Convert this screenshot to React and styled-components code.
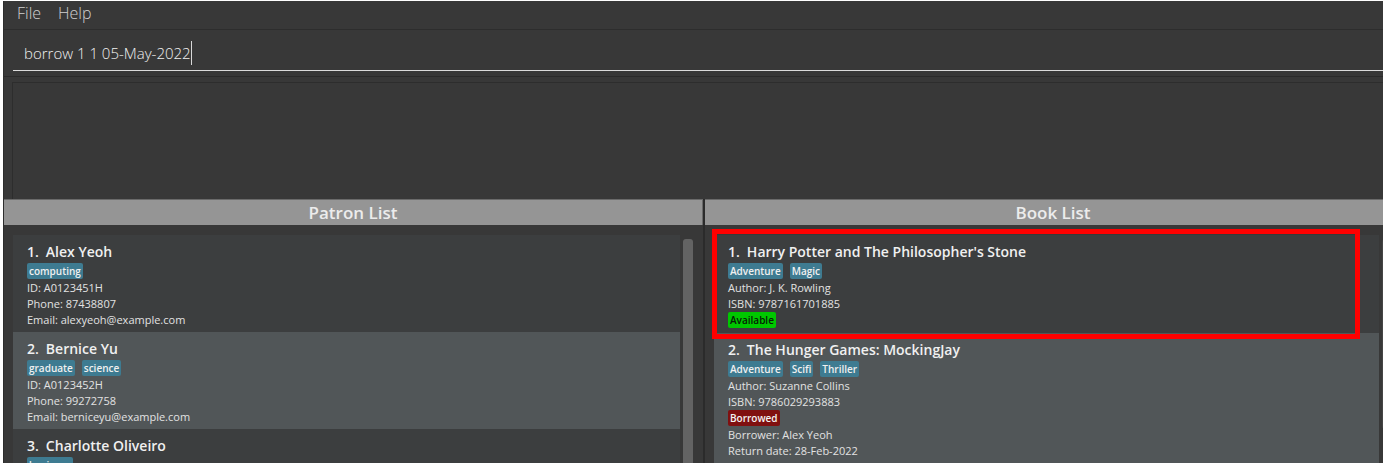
import React from "react";
import styled, { createGlobalStyle } from "styled-components";

const GlobalStyle = createGlobalStyle`
  * { box-sizing: border-box; }
  body {
    margin: 0;
    background: #ffffff;
    font-family: "Open Sans", "Noto Sans", sans-serif;
    color: #e2e2e2;
  }
`;

const Frame = styled.div`
  height: 100vh;
  padding: 1px 3px 4px;
`;

const Window = styled.div`
  height: 100%;
  display: flex;
  flex-direction: column;
  overflow: hidden;
  background: #383838;
  border-left: 1px solid #2d2d2d;
`;

const MenuBar = styled.nav`
  flex: none;
  display: flex;
  gap: 17px;
  height: 29px;
  padding: 0 13px 4px;
  border-bottom: 1px solid #2d2d2d;
`;

const MenuButton = styled.button`
  padding: 0;
  border: 0;
  background: none;
  color: #d0d0d0;
  font: 300 16px/24px "Open Sans", "Noto Sans", sans-serif;
`;

const CommandBar = styled.form`
  flex: none;
  height: 47px;
  padding: 5px 0 5px 9px;
  border-bottom: 1px solid #2b2b2b;
`;

const CommandField = styled.div`
  display: flex;
  align-items: center;
  height: 36px;
  padding-left: 11px;
  border-bottom: 1px solid #dcdcdc;
`;

const CommandInput = styled.input`
  field-sizing: content;
  padding: 0;
  border: 0;
  outline: 0;
  background: none;
  color: #f0f0f0;
  caret-color: transparent;
  font: 300 15px/24px "Open Sans", "Noto Sans", sans-serif;
`;

const Caret = styled.span`
  width: 1px;
  height: 24px;
  background: #d8d8d8;
`;

const ResultArea = styled.section`
  flex: none;
  height: 122px;
  padding: 5px 0 0 8px;
`;

const ResultBox = styled.output`
  display: block;
  height: 100%;
  border: solid #2d2d2d;
  border-width: 1px 0 0 1px;
`;

const Split = styled.main`
  flex: 1;
  min-height: 0;
  display: grid;
  grid-template-columns: 1fr 1fr;
  width: calc(100% + 19px);
`;

const Panel = styled.section`
  min-width: 0;
  min-height: 0;
  display: flex;
  flex-direction: column;
  & + & { border-left: 2px solid #2b2b2b; }
`;

const PanelTitle = styled.h2`
  flex: none;
  margin: 0;
  padding-top: 1px;
  border-top: 1px solid #6a6a6a;
  border-right: 1px solid #6a6a6a;
  background: #959595;
  color: #ececec;
  font-size: 17px;
  font-weight: 600;
  line-height: 24px;
  text-align: center;
`;

const PanelBody = styled.div`
  flex: 1;
  min-height: 0;
  display: flex;
  gap: 3px;
  padding: 10px 10px 0 9px;
`;

const CardList = styled.ol`
  flex: 1;
  margin: 0;
  padding: 0;
  list-style: none;
`;

const ScrollThumb = styled.div`
  width: 10px;
  height: ${(p) => p.$length};
  margin-top: 4px;
  border-radius: 3px;
  background: ${(p) => (p.$faint ? "#454545" : "#636363")};
`;

const Card = styled.li`
  position: relative;
  padding: 6px 14px 4px;
  background: #3c3e3f;
  font-size: 11px;
  line-height: 16px;
  &:nth-child(even) { background: #515658; }
`;

const CardTitle = styled.h3`
  display: flex;
  gap: 7px;
  margin: 0;
  color: #f0f0f0;
  font-size: 14px;
  font-weight: 600;
  line-height: 22px;
`;

const Tags = styled.div`
  display: flex;
  gap: 7px;
  margin-bottom: 1px;
`;

const Tag = styled.span`
  padding: 0 2px;
  border-radius: 2px;
  background: #3e7b91;
  color: #f0f0f0;
  font-size: 10px;
  font-weight: 600;
  line-height: 16px;
`;

const Status = styled(Tag)`
  display: block;
  width: fit-content;
  margin-bottom: 1px;
  background: ${(p) => (p.$available ? "#00c800" : "#801010")};
  color: ${(p) => (p.$available ? "#062006" : "#f4f4f4")};
`;

const Line = styled.p`
  margin: 0;
`;

const Highlight = styled.div`
  position: absolute;
  inset: -6px 19px -6px -2px;
  z-index: 1;
  border: 5px solid #ff0000;
`;

const patrons = [
  { name: "Alex Yeoh", tags: ["computing"], lines: ["ID: A0123451H", "Phone: 87438807", "Email: alexyeoh@example.com"] },
  { name: "Bernice Yu", tags: ["graduate", "science"], lines: ["ID: A0123452H", "Phone: 99272758", "Email: berniceyu@example.com"] },
  { name: "Charlotte Oliveiro", tags: ["business"], lines: [] },
];

const books = [
  {
    name: "Harry Potter and The Philosopher's Stone",
    tags: ["Adventure", "Magic"],
    lines: ["Author: J. K. Rowling", "ISBN: 9787161701885"],
    status: "Available",
    selected: true,
  },
  {
    name: "The Hunger Games: MockingJay",
    tags: ["Adventure", "Scifi", "Thriller"],
    lines: ["Author: Suzanne Collins", "ISBN: 9786029293883"],
    status: "Borrowed",
    loan: ["Borrower: Alex Yeoh", "Return date: 28-Feb-2022"],
  },
];

function ListPanel({ title, items, thumb, faint }) {
  return (
    <Panel>
      <PanelTitle>{title}</PanelTitle>
      <PanelBody>
        <CardList>
          {items.map((item, i) => (
            <Card key={item.name}>
              <CardTitle>
                <span>{i + 1}.</span>
                <span>{item.name}</span>
              </CardTitle>
              <Tags>
                {item.tags.map((t) => <Tag key={t}>{t}</Tag>)}
              </Tags>
              {item.lines.map((l) => <Line key={l}>{l}</Line>)}
              {item.status && (
                <Status $available={item.status === "Available"}>{item.status}</Status>
              )}
              {item.loan?.map((l) => <Line key={l}>{l}</Line>)}
              {item.selected && <Highlight />}
            </Card>
          ))}
        </CardList>
        <ScrollThumb $length={thumb} $faint={faint} />
      </PanelBody>
    </Panel>
  );
}

export default function App() {
  return (
    <Frame>
      <GlobalStyle />
      <Window>
        <MenuBar>
          <MenuButton>File</MenuButton>
          <MenuButton>Help</MenuButton>
        </MenuBar>
        <CommandBar onSubmit={(e) => e.preventDefault()}>
          <CommandField>
            <CommandInput aria-label="Command" defaultValue="borrow 1 1 05-May-2022" />
            <Caret />
          </CommandField>
        </CommandBar>
        <ResultArea>
          <ResultBox aria-label="Result" />
        </ResultArea>
        <Split>
          <ListPanel title="Patron List" items={patrons} thumb="100%" />
          <ListPanel title="Book List" items={books} thumb="190px" faint />
        </Split>
      </Window>
    </Frame>
  );
}
